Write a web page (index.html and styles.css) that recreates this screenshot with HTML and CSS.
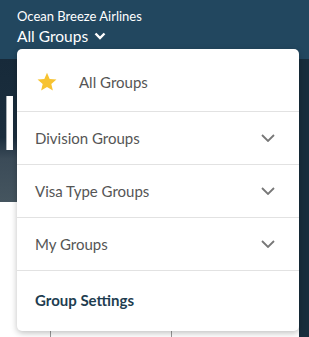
FILE: index.html
```html
<!DOCTYPE html>
<html lang="en">
<head>
    <meta charset="UTF-8">
    <meta name="viewport" content="width=device-width, initial-scale=1.0">
    <title>Ocean Breeze Airlines - Groups</title>
    <link rel="stylesheet" href="styles.css">
</head>
<body>
    <header class="topbar">
        <div class="company">Ocean Breeze Airlines</div>
        <button class="group-toggle">
            All Groups
            <svg width="12" height="8" viewBox="0 0 12 8"><path d="M1.5 1.5 L6 6 L10.5 1.5" fill="none" stroke="#fff" stroke-width="2.4"/></svg>
        </button>
    </header>

    <div class="page">
        <main class="main">
            <section class="hero">
                <span class="hero-title">elc</span>
            </section>
            <section class="content">
                <div class="sketch"></div>
            </section>
        </main>
        <aside class="side"></aside>
    </div>

    <div class="dropdown">
        <div class="item item-first">
            <svg class="star" width="22" height="22" viewBox="0 0 24 24"><path d="M12 1.8 L14.9 8.6 L22.3 9.2 L16.7 14.1 L18.4 21.4 L12 17.5 L5.6 21.4 L7.3 14.1 L1.7 9.2 L9.1 8.6 Z" fill="#f7c331"/></svg>
            <span>All Groups</span>
        </div>
        <div class="item">
            <span>Division Groups</span>
            <svg class="chev" width="14" height="8" viewBox="0 0 14 8"><path d="M1 1 L7 7 L13 1" fill="none" stroke="#777" stroke-width="1.8"/></svg>
        </div>
        <div class="item">
            <span>Visa Type Groups</span>
            <svg class="chev" width="14" height="8" viewBox="0 0 14 8"><path d="M1 1 L7 7 L13 1" fill="none" stroke="#777" stroke-width="1.8"/></svg>
        </div>
        <div class="item">
            <span>My Groups</span>
            <svg class="chev" width="14" height="8" viewBox="0 0 14 8"><path d="M1 1 L7 7 L13 1" fill="none" stroke="#777" stroke-width="1.8"/></svg>
        </div>
        <div class="item item-settings">
            <span>Group Settings</span>
        </div>
    </div>
</body>
</html>
```

FILE: styles.css
```css
body {
    margin: 0;
    padding: 0;
    font-family: 'Lato', 'Open Sans', sans-serif;
    height: 337px;
    overflow: hidden;
    background-color: #fff;
}

.topbar {
    height: 59px;
    background-color: #22475f;
    color: #fff;
    padding: 8px 0 0 17px;
    box-sizing: border-box;
}

.company {
    font-size: 13px;
    line-height: 16px;
}

.group-toggle {
    margin-top: 3px;
    padding: 0;
    background: none;
    border: none;
    color: #fff;
    font-family: inherit;
    font-size: 15.5px;
    line-height: 18px;
    display: flex;
    align-items: center;
    gap: 6px;
}

.page {
    display: flex;
    height: 278px;
}

.main {
    flex: 1;
    display: flex;
    flex-direction: column;
}

.hero {
    height: 143px;
    background: linear-gradient(180deg, #172a3a 0%, #1b2e3e 55%, #3b4b58 70%, #45555f 100%);
    overflow: hidden;
    position: relative;
}

.hero-title {
    position: absolute;
    left: -38px;
    top: 26px;
    font-size: 74px;
    line-height: 74px;
    font-weight: 400;
    color: #fff;
}

.content {
    flex: 1;
    background-color: #fff;
    position: relative;
}

.sketch {
    position: absolute;
    left: 50px;
    bottom: 0;
    width: 120px;
    height: 8px;
    border-left: 1px solid #999;
    border-right: 1px solid #999;
}

.side {
    width: 10px;
    background-color: #172d3c;
}

.dropdown {
    position: absolute;
    left: 17px;
    top: 49px;
    width: 282px;
    background-color: #fff;
    border-radius: 5px;
    box-shadow: 0 2px 6px rgba(0, 0, 0, 0.25);
}

.item {
    display: flex;
    align-items: center;
    justify-content: space-between;
    box-sizing: border-box;
    height: 53px;
    padding: 0 24px 0 18px;
    border-top: 1px solid #e2e2e2;
    font-size: 15px;
    color: #555;
}

.item-first {
    height: 62px;
    border-top: none;
    justify-content: flex-start;
    gap: 21px;
    padding-left: 19px;
    padding-top: 4px;
}

.item-settings {
    height: 61px;
    padding-bottom: 2px;
    font-weight: bold;
    color: #1e3d50;
}
```
